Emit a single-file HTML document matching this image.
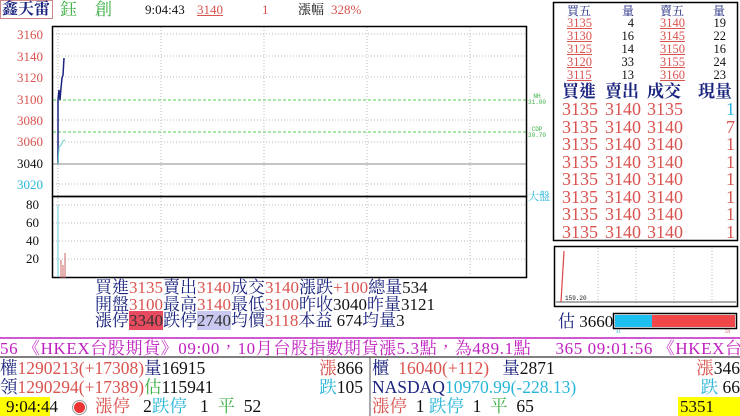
<!DOCTYPE html><html><head><meta charset="utf-8"><style>
*{margin:0;padding:0;box-sizing:border-box}
body{width:740px;height:416px;background:#fff;position:relative;overflow:hidden;font-family:"Liberation Serif","Noto Serif CJK TC","Noto Serif CJK SC",serif;color:#111}
.a{position:absolute;white-space:nowrap;line-height:1}
.r{color:#d9534f}.n{color:#1a237e}.g{color:#3cb043}.c{color:#29b6d8}.m{color:#c020c0}
.b{font-weight:bold}
.u{text-decoration:underline;text-decoration-thickness:1px}
</style></head><body>
<div class="a n b" style="left:0;top:0;width:53px;height:19px;border:1px solid #c88;font-size:16px;line-height:17px;padding-left:1px">鑫天雷</div>
<div class="a g" style="left:60px;top:1px;font-size:17px">鈺</div>
<div class="a g" style="left:95px;top:1px;font-size:17px">創</div>
<div class="a" style="left:145px;top:3px;font-size:13px">9:04:43</div>
<div class="a r u" style="left:197px;top:3px;font-size:13px">3140</div>
<div class="a r" style="left:262px;top:3px;font-size:13px">1</div>
<div class="a" style="left:298px;top:3px;font-size:13px">漲幅</div>
<div class="a r" style="left:331px;top:3px;font-size:13px">328%</div>
<div class="a r" style="left:17px;top:28px;font-size:13px">3160</div>
<div class="a r" style="left:17px;top:50px;font-size:13px">3140</div>
<div class="a r" style="left:17px;top:71px;font-size:13px">3120</div>
<div class="a r" style="left:17px;top:93px;font-size:13px">3100</div>
<div class="a r" style="left:17px;top:114px;font-size:13px">3080</div>
<div class="a r" style="left:17px;top:135px;font-size:13px">3060</div>
<div class="a" style="left:17px;top:157px;font-size:13px">3040</div>
<div class="a c" style="left:17px;top:178px;font-size:13px">3020</div>
<div class="a" style="left:26px;top:198px;font-size:13px">80</div>
<div class="a" style="left:26px;top:216px;font-size:13px">60</div>
<div class="a" style="left:26px;top:234px;font-size:13px">40</div>
<div class="a" style="left:26px;top:252px;font-size:13px">20</div>
<svg class="a" style="left:0;top:0" width="740" height="416">
<g stroke="#bbb" stroke-dasharray="1,2" stroke-width="1">
<line x1="53" y1="34" x2="526" y2="34"/><line x1="53" y1="56" x2="526" y2="56"/><line x1="53" y1="77" x2="526" y2="77"/><line x1="53" y1="120" x2="526" y2="120"/><line x1="53" y1="142" x2="526" y2="142"/><line x1="53" y1="184" x2="526" y2="184"/>
<line x1="53" y1="205" x2="526" y2="205"/><line x1="53" y1="223" x2="526" y2="223"/><line x1="53" y1="241" x2="526" y2="241"/><line x1="53" y1="259" x2="526" y2="259"/>
<line x1="58" y1="27" x2="58" y2="276"/><line x1="161" y1="27" x2="161" y2="276"/><line x1="264" y1="27" x2="264" y2="276"/><line x1="367" y1="27" x2="367" y2="276"/><line x1="470" y1="27" x2="470" y2="276"/>
</g>
<g stroke="#5c5" stroke-dasharray="3,2"><line x1="53" y1="100" x2="526" y2="100"/><line x1="53" y1="132" x2="526" y2="132"/></g>
<line x1="53" y1="164" x2="526" y2="164" stroke="#888"/>
<rect x="52.5" y="26.5" width="474" height="170" fill="none" stroke="#000" stroke-width="1.5"/>
<rect x="52.5" y="196.5" width="474" height="81" fill="none" stroke="#000" stroke-width="1.5"/>
<polyline points="58,164 58,100 59,90 60,100 61,88 62,78 63,75 64,58" fill="none" stroke="#1a237e" stroke-width="1.5"/>
<polyline points="58,164 59,147 61,145 63,141 65,140" fill="none" stroke="#6cc" stroke-width="1"/>
<line x1="58" y1="205" x2="58" y2="277" stroke="#6cd"/>
<g stroke="#c66"><line x1="61" y1="278" x2="61" y2="260"/><line x1="63" y1="278" x2="63" y2="265"/><line x1="65" y1="278" x2="65" y2="253"/></g>
<rect x="554.5" y="246.5" width="183" height="60" fill="none" stroke="#000" stroke-width="1.5"/>
<g stroke="#bbb" stroke-dasharray="1,2"><line x1="598" y1="248" x2="598" y2="305"/><line x1="636" y1="248" x2="636" y2="305"/><line x1="674" y1="248" x2="674" y2="305"/><line x1="712" y1="248" x2="712" y2="305"/></g>
<line x1="556" y1="302" x2="736" y2="302" stroke="#555"/>
<line x1="561" y1="302" x2="564" y2="251" stroke="#d44" stroke-width="1.2"/>
<rect x="553.5" y="2.5" width="184" height="238" fill="none" stroke="#000" stroke-width="1.5"/>
<rect x="613.5" y="313.5" width="123" height="15" fill="#fff" stroke="#000" stroke-width="1.5"/>
<rect x="615" y="315" width="37" height="12" fill="#1ec0f0"/><rect x="652" y="315" width="83" height="12" fill="#f04848"/>
<line x1="0" y1="338" x2="740" y2="338" stroke="#c020c0" stroke-width="1.5"/>
<line x1="0" y1="357" x2="740" y2="357" stroke="#555" stroke-width="1.5"/>
<line x1="370" y1="357" x2="370" y2="416" stroke="#555"/>
</svg>
<div class="a g" style="left:528px;top:94px;font-size:6px;line-height:6px;text-align:center;font-family:'Liberation Mono',monospace">NH<br>31.00</div>
<div class="a g" style="left:528px;top:127px;font-size:6px;line-height:6px;text-align:center;font-family:'Liberation Mono',monospace">CDP<br>30.70</div>
<div class="a c" style="left:528px;top:192px;font-size:11px">大盤</div>
<div class="a" style="left:565px;top:296px;font-size:6px;font-family:'Liberation Mono',monospace">159.20</div>
<div class="a c" style="left:616px;top:330px;font-size:5px">41</div>
<div class="a r" style="left:725px;top:330px;font-size:5px">59</div>
<div class="a n" style="left:567px;top:5px;font-size:12px">買五</div>
<div class="a n" style="left:622px;top:5px;font-size:12px">量</div>
<div class="a n" style="left:660px;top:5px;font-size:12px">賣五</div>
<div class="a n" style="left:713px;top:5px;font-size:12px">量</div>
<div class="a" style="left:567px;top:17px;font-size:12.5px;line-height:13px">
<span class="r u">3135</span><br><span class="r u">3130</span><br><span class="r u">3125</span><br><span class="r u">3120</span><br><span class="r u">3115</span></div>
<div class="a" style="left:600px;width:34px;text-align:right;top:17px;font-size:12.5px;line-height:13px">4<br>16<br>14<br>33<br>13</div>
<div class="a" style="left:660px;top:17px;font-size:12.5px;line-height:13px">
<span class="r u">3140</span><br><span class="r u">3145</span><br><span class="r u">3150</span><br><span class="r u">3155</span><br><span class="r u">3160</span></div>
<div class="a" style="left:700px;width:26px;text-align:right;top:17px;font-size:12.5px;line-height:13px">19<br>22<br>16<br>24<br>23</div>
<div class="a n b" style="left:562px;top:83px;font-size:17px">買進</div>
<div class="a n b" style="left:605px;top:83px;font-size:17px">賣出</div>
<div class="a n b" style="left:647px;top:83px;font-size:17px">成交</div>
<div class="a n b" style="left:698px;top:83px;font-size:17px">現量</div>
<div class="a r" style="left:562px;top:101px;font-size:18px;line-height:17.5px">3135<br>3135<br>3135<br>3135<br>3135<br>3135<br>3135<br>3135</div>
<div class="a r" style="left:605px;top:101px;font-size:18px;line-height:17.5px">3140<br>3140<br>3140<br>3140<br>3140<br>3140<br>3140<br>3140</div>
<div class="a r" style="left:647px;top:101px;font-size:18px;line-height:17.5px">3135<br>3140<br>3140<br>3140<br>3140<br>3140<br>3140<br>3140</div>
<div class="a r" style="left:715px;width:20px;text-align:right;top:101px;font-size:18px;line-height:17.5px"><span class="c">1</span><br>7<br>1<br>1<br>1<br>1<br>1<br>1</div>
<div class="a" style="left:558px;top:313px;font-size:17px"><span class="n">估</span> 3660</div>
<div class="a n" style="left:95px;top:280px;font-size:17px;line-height:16.5px">買進<span class="r">3135</span>賣出<span class="r">3140</span>成交<span class="r">3140</span>漲跌<span class="r">+100</span>總量<span style="color:#111">534</span><br>開盤<span class="r">3100</span>最高<span class="r">3140</span>最低<span class="r">3100</span>昨收<span style="color:#111">3040</span>昨量<span style="color:#111">3121</span><br>漲停<span style="background:#e84a5f;color:#333">3340</span>跌停<span style="background:#c8c8f0;color:#333">2740</span>均價<span class="r">3118</span>本益 <span style="color:#111">674</span>均量<span style="color:#111">3</span></div>
<div class="a m" style="left:0;top:340px;font-size:17px;letter-spacing:0.6px">56 《HKEX台股期貨》09:00，10月台股指數期貨漲5.3點，為489.1點&nbsp;&nbsp;&nbsp;&nbsp;&nbsp;365 09:01:56 《HKEX台股</div>
<div class="a" style="left:0;top:359px;font-size:17.5px;line-height:19px"><span class="n">權</span><span class="r">1290213(+17308)</span><span class="n">量</span>16915<br><span class="n">領</span><span class="r">1290294(+17389)</span><span class="g">估</span>115941</div>
<div class="a" style="left:300px;top:359px;font-size:17.5px;line-height:19px;text-align:right;width:63px"><span class="r">漲</span>866<br><span class="c">跌</span>105</div>
<div class="a" style="left:0;top:397px;width:50px;height:19px;background:#ff0"></div>
<div class="a" style="left:6px;top:398px;font-size:17px">9:04:44</div>
<div class="a" style="left:73px;top:401px;width:13px;height:13px;border-radius:50%;background:#e33;border:1.5px solid #fff;box-shadow:0 0 0 1px #999"></div>
<div class="a" style="left:95px;top:398px;font-size:17.5px"><span class="r">漲停</span>&nbsp;&nbsp;&nbsp;2<span class="c">跌停</span>&nbsp;&nbsp;&nbsp;1&nbsp;&nbsp;<span class="g">平</span>&nbsp;&nbsp;52</div>
<div class="a" style="left:372px;top:359px;font-size:17.5px;line-height:19px"><span class="n">櫃</span>&nbsp;&nbsp;<span class="r">16040(+112)</span>&nbsp;&nbsp;&nbsp;<span class="n">量</span>2871<br><span class="n">NASDAQ</span><span class="c">10970.99(-228.13)</span></div>
<div class="a" style="left:676px;top:359px;font-size:17.5px;line-height:19px;text-align:right;width:64px"><span class="r">漲</span>346<br><span class="c">跌</span>&nbsp;66</div>
<div class="a" style="left:372px;top:398px;font-size:17.5px"><span class="r">漲停</span>&nbsp;&nbsp;1&nbsp;<span class="c">跌停</span>&nbsp;&nbsp;1&nbsp;&nbsp;<span class="g">平</span>&nbsp;&nbsp;65</div>
<div class="a" style="left:678px;top:397px;width:62px;height:19px;background:#ff0"></div>
<div class="a" style="left:680px;top:398px;font-size:17px">5351</div>
</body></html>
